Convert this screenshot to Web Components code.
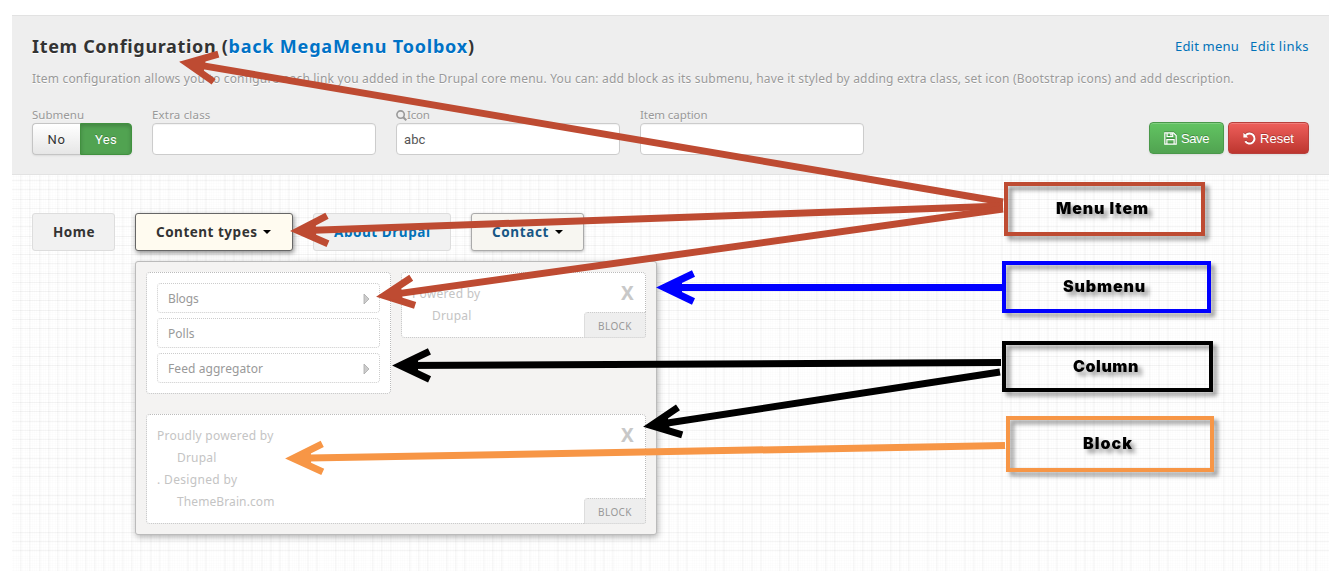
<!DOCTYPE html>
<html lang="en"><head><meta charset="utf-8"><title>MegaMenu Toolbox</title>
<style>html,body{margin:0;background:#fff}body{font-family:"Noto Sans","Open Sans",sans-serif;font-size:12px;color:#999;overflow:hidden}</style>
</head><body>
<mega-page></mega-page>
<script>
const define=(name,css,html,ready)=>customElements.define(name,class extends HTMLElement{
  connectedCallback(){
    if(!this.shadowRoot){
      this.attachShadow({mode:'open'}).innerHTML=`<style>*{box-sizing:border-box}${css}</style>${typeof html==='function'?html(this):html}`;
    }
    if(ready)ready(this);
  }
});

// Tracks its text evenly so that it takes the width given in "w".
define('tracked-text',`:host{display:inline-block;white-space:pre}`,`<slot></slot>`,el=>{
  el.style.letterSpacing='0px';
  const n=el.textContent.length,w=el.getBoundingClientRect().width;
  el.style.letterSpacing=((+el.getAttribute('w')-w)/n).toFixed(3)+'px';
});

define('form-field',`:host{display:block;width:224px}
.l{display:flex;align-items:center;height:16px;line-height:16px;font-size:11.5px}
.i{height:32px;border:1px solid #ccc;border-radius:4px;background:#fff;box-shadow:inset 0 1px 1px rgba(0,0,0,.05);padding:0 7px;line-height:31px;color:#555;font-family:Roboto,sans-serif;font-size:13px}`,
`<div class="l"><slot name="label"></slot></div><div class="i"><slot></slot></div>`);

define('yes-no',`:host{display:block;width:100px}
.l{height:16px;line-height:16px;font-size:11.5px}
.g{display:flex;height:32px;line-height:32px;font-size:13px;font-family:Roboto,sans-serif;text-align:center;box-shadow:0 1px 2px rgba(0,0,0,.08);border-radius:4px}
.n{width:48px;border:1px solid #c4c4c4;border-right:0;border-radius:4px 0 0 4px;background:linear-gradient(#fff,#e6e6e6);color:#333}
.y{width:52px;border:1px solid #41913f;border-radius:0 4px 4px 0;background:#51a351;color:#fff;box-shadow:inset 0 2px 4px rgba(0,0,0,.2);text-shadow:0 -1px 0 rgba(0,0,0,.2)}`,
`<div class="l"><tracked-text w="52">Submenu</tracked-text></div><div class="g"><div class="n"><tracked-text w="18">No</tracked-text></div><div class="y"><tracked-text w="22">Yes</tracked-text></div></div>`);

define('action-button',`:host{display:flex;align-items:center;gap:4px;height:32px;padding:1px 0 0 14px;border-radius:4px;color:#fff;font:13px/32px "Liberation Sans",sans-serif;text-shadow:0 -1px 0 rgba(0,0,0,.25);box-shadow:inset 0 1px 0 rgba(255,255,255,.2),0 1px 2px rgba(0,0,0,.08)}
:host([kind=save]){width:75px;background:linear-gradient(#62c462,#51a351);border:1px solid #4a984a}
:host([kind=reset]){width:81px;background:linear-gradient(#ee5f5b,#bd362f);border:1px solid #b8403c}
svg{filter:drop-shadow(0 -1px 0 rgba(0,0,0,.2));margin-top:-1px}`,
el=>(el.getAttribute('kind')==='save'
?`<svg width="13" height="13" viewBox="0 0 13 13" fill="none" stroke="#fff" stroke-width="1.2"><path d="M.8.8H9.5L12.2 3.5V12.2H.8Z"/><path d="M3.1 1V4.5H8.7V1M2.9 12V7.7H10.1V12"/><path d="M6.2 1.2H7.8V3.6H6.2Z" fill="#fff" stroke="none"/></svg>`
:`<svg width="13" height="13" viewBox="0 0 13 13"><path d="M2.7 3.3A5 5 0 1 1 2.3 9.2" fill="none" stroke="#fff" stroke-width="2"/><path d="M.4.8V5.6H5.2Z" fill="#fff"/></svg>`)+`<slot></slot>`);

define('config-panel',`:host{display:block;margin:0 13px 0 12px;height:160px;padding:18px 20px 0;background:#eee;border-top:1px solid #e2e2e2;border-bottom:1px solid #e2e2e2}
.row{display:flex;justify-content:space-between}
.head{height:24px;align-items:center}
h1{margin:0;font-size:18px;line-height:24px;font-weight:700;color:#333;white-space:nowrap;text-shadow:0 1px 0 #fff}
a{color:#0072c6}
.links{display:flex;gap:11px;font-size:13px;color:#0072b9}
p{margin:11px 0 18px;height:20px;line-height:20px;white-space:nowrap;text-shadow:0 1px 0 #fff}
.fields{display:flex;gap:20px;text-shadow:0 1px 0 rgba(255,255,255,.6)}
.acts{display:flex;gap:4px;align-self:flex-end;margin-bottom:1px}`,
`<div class="row head"><h1><tracked-text w="196.5">Item Configuration (</tracked-text><a><tracked-text w="239.5">back MegaMenu Toolbox</tracked-text></a>)</h1>
<div class="links"><tracked-text w="64">Edit menu</tracked-text><tracked-text w="59">Edit links</tracked-text></div></div>
<p><tracked-text w="1202">Item configuration allows you to configure each link you added in the Drupal core menu. You can: add block as its submenu, have it styled by adding extra class, set icon (Bootstrap icons) and add description.</tracked-text></p>
<div class="row"><div class="fields"><yes-no></yes-no>
<form-field><tracked-text slot="label" w="58.5">Extra class</tracked-text></form-field>
<form-field><svg slot="label" width="11" height="11" viewBox="0 0 11 11" fill="none" stroke="#999"><circle cx="4.6" cy="4.6" r="3.7" stroke-width="1.6"/><path d="M7.2 7.2L10.3 10.3" stroke-width="2"/></svg><tracked-text slot="label" w="22.5">Icon</tracked-text><tracked-text w="21.5">abc</tracked-text></form-field>
<form-field><tracked-text slot="label" w="67.5">Item caption</tracked-text></form-field></div>
<div class="acts"><action-button kind="save"><tracked-text w="28">Save</tracked-text></action-button><action-button kind="reset"><tracked-text w="34">Reset</tracked-text></action-button></div></div>`);

define('menu-tab',`:host{display:flex;align-items:center;height:38px;padding-left:20px;border:1px solid #ddd;border-radius:3px;background:#f1f1f1;color:#0072b9;font-size:13.5px;font-weight:700}
:host([kind=home]){color:#333}
:host([kind=open]){background:#fffbf0;border-color:#666;color:#333;box-shadow:1px 2px 5px rgba(0,0,0,.45)}
:host([kind=drop]){background:#f7f6f1;border-color:#aaa;color:#175785;box-shadow:0 1px 3px rgba(0,0,0,.25)}
i{display:none;border:4px solid transparent;border-top-color:#000;border-bottom:0;margin-left:6px}
:host([kind=open]) i,:host([kind=drop]) i{display:block}`,`<slot></slot><i></i>`);

define('sub-item',`:host{display:flex;align-items:center;justify-content:space-between;height:30px;padding:1px 9px 0 10px;border:1px dotted #ccc;border-radius:4px;background:#fff;color:#999}
svg{display:none}:host([more]) svg{display:block}`,
`<slot></slot><svg width="7" height="12" viewBox="0 0 7 12"><path d="M1 1V11L6 6Z" fill="#ccc" stroke="#aaa" stroke-width=".8"/></svg>`);

define('menu-column',`:host{display:flex;flex-direction:column;gap:5px;padding:10px;border:1px dotted #bbb;border-radius:4px;background:#fff}`,`<slot></slot>`);

define('menu-block',`:host{display:block;position:relative;padding:10px;border:1px dotted #bbb;border-radius:4px;background:#fff;line-height:22px;color:#c4c4c4}
.x{position:absolute;right:10px;top:8px;font-size:19px;line-height:24px;font-weight:700;color:#c8c8c8}
.tag{position:absolute;right:-1px;bottom:-1px;width:62px;height:26px;border:1px dotted #ccc;border-radius:4px 0 3px 0;background:#eee;color:#999;font-size:10px;line-height:26px;padding-left:13px}`,
`<slot></slot><span class="x"><tracked-text w="14">X</tracked-text></span><span class="tag"><tracked-text w="34">BLOCK</tracked-text></span>`);

define('sub-menu',`:host{display:grid;grid-template-columns:245px 245px;column-gap:10px;row-gap:20px;align-items:start;width:522px;height:274px;margin:10px 0 0 103px;padding:10px;border:1px solid #bbb;border-radius:3px;background:#f4f3f2;box-shadow:1px 2px 6px rgba(0,0,0,.3)}
.wide{grid-column:1/3}.in{padding-left:20px}`,
`<menu-column><sub-item more><tracked-text w="30.5">Blogs</tracked-text></sub-item><sub-item><tracked-text w="26.5">Polls</tracked-text></sub-item><sub-item more><tracked-text w="95">Feed aggregator</tracked-text></sub-item></menu-column>
<menu-block><div><tracked-text w="68.5">Powered by</tracked-text></div><div class="in"><tracked-text w="39.5">Drupal</tracked-text></div></menu-block>
<menu-block class="wide"><div><tracked-text w="116.5">Proudly powered by</tracked-text></div><div class="in"><tracked-text w="39.5">Drupal</tracked-text></div><div><tracked-text w="80.5">. Designed by</tracked-text></div><div class="in"><tracked-text w="97.5">ThemeBrain.com</tracked-text></div></menu-block>`);

define('menu-canvas',`:host{display:block;margin:0 13px 0 12px;padding:38px 20px 0;height:396px;
background:repeating-linear-gradient(90deg,#0000 0 8.25px,#0000000a 8.25px 9.25px) 0.4px 0,repeating-linear-gradient(#0000 0 8.25px,#0000000a 8.25px 9.25px) 0 -3px,repeating-linear-gradient(90deg,#0000 0 1.3px,#00000002 1.3px 2.3px),repeating-linear-gradient(#0000 0 1.3px,#00000002 1.3px 2.3px),#fff}
nav{display:flex;gap:20px}`,
`<nav><menu-tab kind="home" style="width:83px"><tracked-text w="42">Home</tracked-text></menu-tab>
<menu-tab kind="open" style="width:158px"><tracked-text w="101.5">Content types</tracked-text></menu-tab>
<menu-tab style="width:138px"><tracked-text w="96.5">About Drupal</tracked-text></menu-tab>
<menu-tab kind="drop" style="width:113px"><tracked-text w="57">Contact</tracked-text></menu-tab></nav><sub-menu></sub-menu>`);

// A framed annotation label placed freely over the page.
define('note-label',`:host{position:absolute;border:4px solid;filter:drop-shadow(4px 4px 2px rgba(0,0,0,.4))}
span{position:absolute;color:#000;font:900 16px/20px Inter,sans-serif}`,
el=>`<span style="left:${el.getAttribute('tx')}px;top:${el.getAttribute('ty')}px"><slot></slot></span>`,
el=>{const[x,y,w,h]=el.getAttribute('box').split(',');el.style.cssText=`left:${x}px;top:${y}px;width:${w}px;height:${h}px;box-sizing:border-box;border-color:${el.getAttribute('tone')}`});

const arrow=(x,y,tx,ty,c)=>{
  const a=Math.atan2(ty-y,tx-x)*180/Math.PI,l=Math.hypot(tx-x,ty-y);
  return `<g transform="translate(${x} ${y}) rotate(${a})" fill="none" stroke="${c}" stroke-width="7"><path d="M8 0H${l}"/><path d="M35.5-14L6.2 0L35.5 14" stroke-miterlimit="10"/><path d="M-1 0L24-8V8Z" fill="${c}" stroke="none"/></g>`;
};
define('note-layer',`:host{position:absolute;left:0;top:0;width:1342px;height:571px;pointer-events:none}svg{position:absolute;left:0;top:0}`,
`<svg width="1342" height="571">${[[181,62,1003,202,'#be4b32'],[292,231,1003,206,'#be4b32'],[378,296.5,1003,209,'#be4b32'],[658,287.5,1003,287.5,'#00f'],[394,365.5,1001,362.5,'#000'],[645,426.5,1000,372,'#000'],[287,458.5,1005,445.5,'#f79646']].map(a=>arrow(...a)).join('')}</svg>
<note-label box="1004,182,201,54" tone="#be4b32" tx="48" ty="12"><tracked-text w="93">Menu Item</tracked-text></note-label>
<note-label box="1002,261,209,52" tone="#00f" tx="57" ty="11"><tracked-text w="83">Submenu</tracked-text></note-label>
<note-label box="1002,341,211,51" tone="#000" tx="67" ty="11"><tracked-text w="66">Column</tracked-text></note-label>
<note-label box="1006,416,208,56" tone="#f79646" tx="73" ty="13"><tracked-text w="50">Block</tracked-text></note-label>`);

define('mega-page',`:host{display:block;position:relative;height:571px;padding-top:15px;overflow:hidden;box-sizing:border-box}
config-panel,menu-canvas{box-sizing:border-box}`,
`<config-panel></config-panel><menu-canvas></menu-canvas><note-layer></note-layer>`);
</script>
</body></html>
